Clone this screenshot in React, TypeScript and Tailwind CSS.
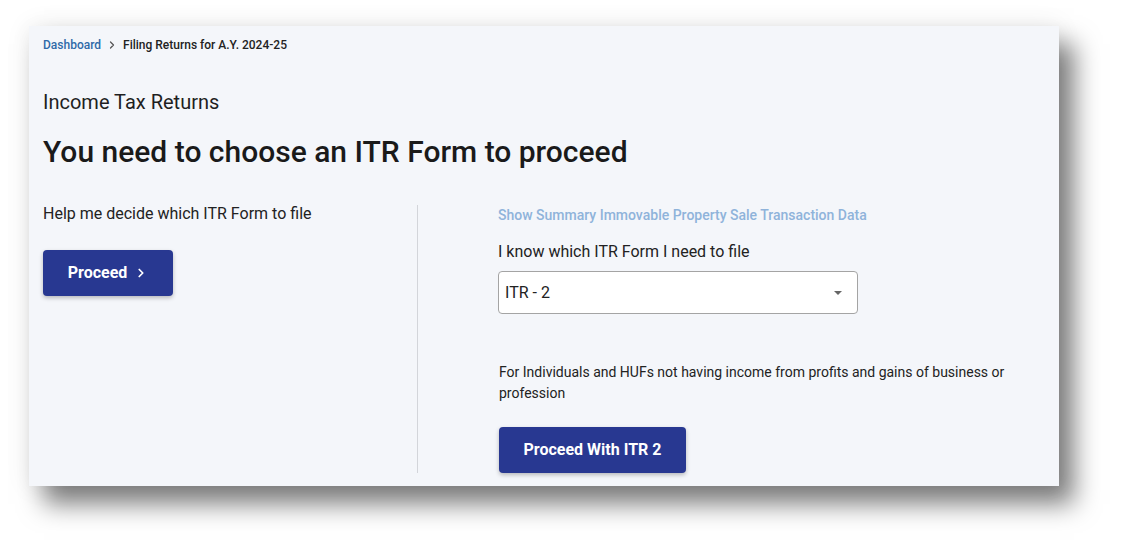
import { ChevronRight } from "lucide-react";

export default function App() {
  return (
    <div className="min-h-screen bg-white pt-[26px] pl-[29px] font-['Roboto',sans-serif]">
      <div className="w-[1030px] bg-[#f4f6fa] px-[14px] pt-[11px] pb-[13px] shadow-[15px_18px_24px_rgba(0,0,0,0.5),0_0_24px_rgba(0,0,0,0.08)]">
        {/* breadcrumb */}
        <div className="flex items-center h-4 text-[12px] font-medium">
          <span className="text-[#2f6aa8]">Dashboard</span>
          <ChevronRight className="w-3 h-3 mx-[5px] text-[#555]" strokeWidth={2.5} />
          <span className="text-[#222]">Filing Returns for A.Y. 2024-25</span>
        </div>

        <h2 className="mt-[35px] text-[20px] leading-7 text-[#1f1f1f]">
          Income Tax Returns
        </h2>
        <h1 className="mt-4 text-[30px] leading-10 font-medium text-[#1a1a1a]">
          You need to choose an ITR Form to proceed
        </h1>

        <div className="mt-[30px] flex">
          <div className="w-[374px]">
            <p className="text-[16px] leading-6 text-[#222]">
              Help me decide which ITR Form to file
            </p>
            <button className="mt-6 w-[130px] h-[46px] rounded bg-[#283891]
              text-white text-[16px] font-bold flex items-center justify-center
              gap-[7px] shadow-[0_2px_4px_rgba(0,0,0,0.25)]">
              Proceed
              <ChevronRight className="w-3.5 h-3.5" strokeWidth={3} />
            </button>
          </div>

          <div className="flex-1 border-l border-[#d3d5da] mt-[3px] pl-[80px]">
            <p className="text-[14px] leading-5 font-medium text-[#8fb3da]">
              Show Summary Immovable Property Sale Transaction Data
            </p>
            <p className="mt-[15px] text-[16px] leading-6 text-[#222]">
              I know which ITR Form I need to file
            </p>
            <div className="mt-[7px] w-[360px] h-[43px] bg-white border
              border-[#a4a4a4] rounded flex items-center justify-between
              pl-[6px] pr-[15px]">
              <span className="text-[16px] text-[#222]">ITR - 2</span>
              <span className="w-0 h-0 border-l-[4px] border-r-[4px]
                border-t-[4px] border-l-transparent border-r-transparent
                border-t-[#666]" />
            </div>
            <p className="mt-[48px] pl-px text-[14px] leading-[21px] text-[#222] pr-4">
              For Individuals and HUFs not having income from profits and gains
              of business or profession
            </p>
            <button className="mt-[23px] ml-px w-[187px] h-[46px] rounded bg-[#283891]
              text-white text-[16px] font-bold
              shadow-[0_2px_4px_rgba(0,0,0,0.25)]">
              Proceed With ITR 2
            </button>
          </div>
        </div>
      </div>
    </div>
  );
}
